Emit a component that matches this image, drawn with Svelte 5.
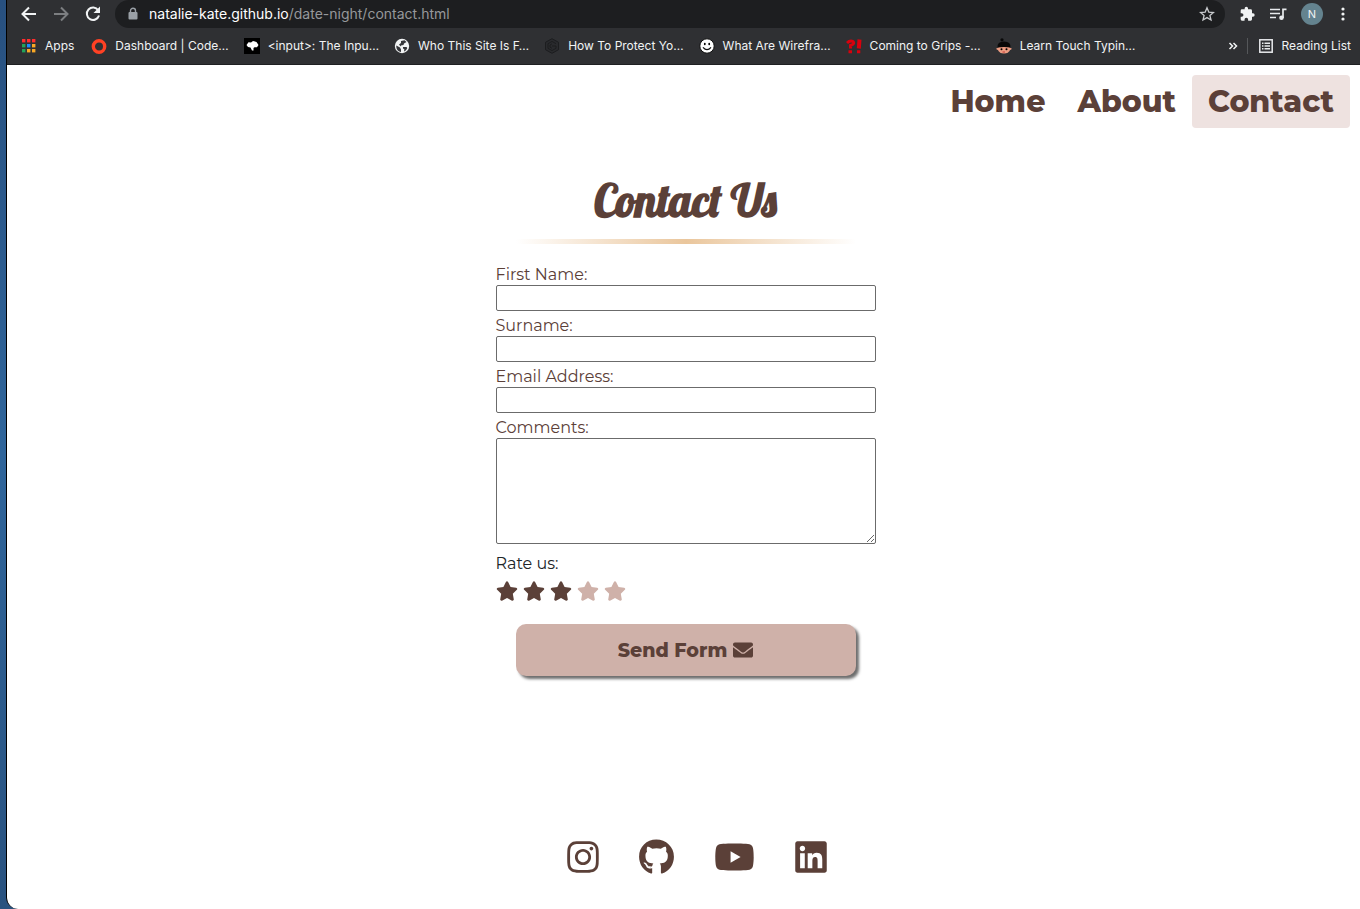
<script>
  const bookmarks = [
    { icon: 'ring', label: 'Dashboard | Code…' },
    { icon: 'mdn', label: '<input>: The Inpu…' },
    { icon: 'globe', label: 'Who This Site Is F…' },
    { icon: 'hex', label: 'How To Protect Yo…' },
    { icon: 'smile', label: 'What Are Wirefra…' },
    { icon: 'grips', label: 'Coming to Grips -…' },
    { icon: 'face', label: 'Learn Touch Typin…' }
  ];
  const appColours = ['#ff2d2d', '#ff2d2d', '#ff2d2d', '#22a35a', '#1a8cff', '#f9a825', '#22a35a', '#f9a825', '#f9a825'];
  const pages = ['Home', 'About', 'Contact'];
  const fields = [
    { id: 'first-name', label: 'First Name:', type: 'text' },
    { id: 'surname', label: 'Surname:', type: 'text' },
    { id: 'email', label: 'Email Address:', type: 'email' }
  ];
  let rating = $state(3);

  const social = [
    { name: 'Instagram', w: 32, box: '0 0 448 512', d: 'M224.1 141c-63.6 0-114.9 51.3-114.9 114.9s51.3 114.9 114.9 114.9S339 319.5 339 255.9 287.7 141 224.1 141zm0 189.6c-41.1 0-74.7-33.5-74.7-74.7s33.5-74.7 74.7-74.7 74.7 33.5 74.7 74.7-33.6 74.7-74.7 74.7zm146.4-194.3c0 14.9-12 26.8-26.8 26.8-14.9 0-26.8-12-26.8-26.8s12-26.8 26.8-26.8 26.8 12 26.8 26.8zm76.1 27.2c-1.7-35.9-9.9-67.7-36.2-93.9-26.2-26.2-58-34.4-93.9-36.2-37-2.1-147.9-2.1-184.9 0-35.8 1.7-67.6 9.9-93.9 36.1s-34.4 58-36.2 93.9c-2.1 37-2.1 147.9 0 184.9 1.7 35.9 9.9 67.7 36.2 93.9s58 34.4 93.9 36.2c37 2.1 147.9 2.1 184.9 0 35.9-1.7 67.7-9.9 93.9-36.2 26.2-26.2 34.4-58 36.2-93.9 2.1-37 2.1-147.8 0-184.8zM398.8 388c-7.8 19.6-22.9 34.7-42.6 42.6-29.5 11.7-99.5 9-132.1 9s-102.7 2.6-132.1-9c-19.6-7.8-34.7-22.9-42.6-42.6-11.7-29.5-9-99.5-9-132.1s-2.6-102.7 9-132.1c7.8-19.6 22.9-34.7 42.6-42.6 29.5-11.7 99.5-9 132.1-9s102.7-2.6 132.1 9c19.6 7.8 34.7 22.9 42.6 42.6 11.7 29.5 9 99.5 9 132.1s2.7 102.7-9 132.1z' },
    { name: 'GitHub', w: 35, box: '0 0 496 512', d: 'M165.9 397.4c0 2-2.3 3.6-5.2 3.6-3.3.3-5.6-1.3-5.6-3.6 0-2 2.3-3.6 5.2-3.6 3-.3 5.6 1.3 5.6 3.6zm-31.1-4.5c-.7 2 1.3 4.3 4.3 4.9 2.6 1 5.6 0 6.2-2s-1.3-4.3-4.3-5.2c-2.6-.7-5.5.3-6.2 2.3zm44.2-1.7c-2.9.7-4.9 2.6-4.6 4.9.3 2 2.9 3.3 5.9 2.6 2.9-.7 4.9-2.6 4.6-4.6-.3-1.9-3-3.2-5.9-2.9zM244.8 8C106.1 8 0 113.3 0 252c0 110.9 69.8 205.8 169.5 239.2 12.8 2.3 17.3-5.6 17.3-12.1 0-6.2-.3-40.4-.3-61.4 0 0-70 15-84.7-29.8 0 0-11.4-29.1-27.8-36.6 0 0-22.9-15.7 1.6-15.4 0 0 24.9 2 38.6 25.8 21.9 38.6 58.6 27.5 72.9 20.9 2.3-16 8.8-27.1 16-33.7-55.9-6.2-112.3-14.3-112.3-110.5 0-27.5 7.6-41.3 23.6-58.9-2.6-6.5-11.1-33.3 2.6-67.9 20.9-6.5 69 27 69 27 20-5.6 41.5-8.5 62.8-8.5s42.8 2.9 62.8 8.5c0 0 48.1-33.6 69-27 13.7 34.7 5.2 61.4 2.6 67.9 16 17.7 25.8 31.5 25.8 58.9 0 96.5-58.9 104.2-114.8 110.5 9.2 7.9 17 22.9 17 46.4 0 33.7-.3 75.4-.3 83.6 0 6.5 4.6 14.4 17.3 12.1C428.2 457.8 496 362.9 496 252 496 113.3 383.5 8 244.8 8z' },
    { name: 'YouTube', w: 41, box: '0 0 576 512', d: 'M549.655 124.083c-6.281-23.65-24.787-42.276-48.284-48.597C458.781 64 288 64 288 64S117.22 64 74.629 75.486c-23.497 6.322-42.003 24.947-48.284 48.597-11.412 42.867-11.412 132.305-11.412 132.305s0 89.438 11.412 132.305c6.281 23.65 24.787 41.5 48.284 47.821C117.22 448 288 448 288 448s170.78 0 213.371-11.486c23.497-6.321 42.003-24.171 48.284-47.821 11.412-42.867 11.412-132.305 11.412-132.305s0-89.438-11.412-132.305zm-317.51 213.508V175.185l142.739 81.205-142.739 81.201z' },
    { name: 'LinkedIn', w: 32, box: '0 0 448 512', d: 'M416 32H31.9C14.3 32 0 46.5 0 64.3v383.4C0 465.5 14.3 480 31.9 480H416c17.6 0 32-14.5 32-32.3V64.3c0-17.8-14.4-32.3-32-32.3zM135.4 416H69V202.2h66.5V416zm-33.2-243c-21.3 0-38.5-17.3-38.5-38.5S80.9 96 102.2 96c21.2 0 38.5 17.3 38.5 38.5 0 21.3-17.2 38.5-38.5 38.5zm282.1 243h-66.4V312c0-24.8-.5-56.7-34.5-56.7-34.6 0-39.9 27-39.9 54.9V416h-66.4V202.2h63.7v29.2h.9c8.9-16.8 30.6-34.5 62.9-34.5 67.2 0 79.7 44.3 79.7 101.9V416z' }
  ];
</script>

<div class="desktop">
  <div class="window">
    <header class="chrome">
      <div class="toolbar">
        <button class="tool" aria-label="Back"><svg width="18" height="18" viewBox="0 0 18 18"><path d="M16 9H3M9 2.5L2.5 9L9 15.500" fill="none" stroke="#f1f3f4" stroke-width="2" /></svg></button>
        <button class="tool" aria-label="Forward"><svg width="18" height="18" viewBox="0 0 18 18"><path d="M2 9H15M9 2.500L15.500 9L9 15.500" fill="none" stroke="#7c7e81" stroke-width="2" /></svg></button>
        <button class="tool" aria-label="Reload"><svg width="18" height="18" viewBox="0 0 18 18"><path d="M14.200 5.200A6.200 6.200 0 1 0 15 10.500" fill="none" stroke="#f1f3f4" stroke-width="2" /><path d="M16 1.500V8H9.500Z" fill="#f1f3f4" /></svg></button>
        <div class="address">
          <svg width="10" height="14" viewBox="0 0 10 14"><path d="M2.500 6V3.800a2.500 2.500 0 0 1 5 0V6" fill="none" stroke="#9aa0a6" stroke-width="1.400" /><rect x="0.500" y="5" width="9" height="7.500" rx="1" fill="#9aa0a6" /></svg>
          <span class="url">natalie-kate.github.io<span class="path">/date-night/contact.html</span></span>
          <button aria-label="Bookmark this page"><svg width="16" height="16" viewBox="0 0 16 16"><path d="M8 1.800L9.800 6.100L14.500 6.500L10.900 9.500L12 14L8 11.600L4 14L5.100 9.500L1.500 6.500L6.200 6.100Z" fill="none" stroke="#c8cacd" stroke-width="1.300" /></svg></button>
        </div>
        <div class="extras">
          <button aria-label="Extensions"><svg width="16" height="16" viewBox="0 0 24 24"><path fill="#f1f3f4" d="M21 11h-1.500V7a2 2 0 0 0-2-2h-4V3.500a2.500 2.500 0 0 0-5 0V5h-4a2 2 0 0 0-2 2v3.800H4a2.700 2.700 0 0 1 0 5.400H2.500V20a2 2 0 0 0 2 2h3.800v-1.500a2.700 2.700 0 0 1 5.400 0V22h3.800a2 2 0 0 0 2-2v-4H21a2.500 2.500 0 0 0 0-5z" /></svg></button>
          <button aria-label="Media controls"><svg width="18" height="16" viewBox="0 0 18 16"><path d="M1 3.500H11M1 7.500H11M1 11.500H7M14 12V3.300H17.500" fill="none" stroke="#e8eaed" stroke-width="1.700" /><circle cx="12.500" cy="11.800" r="2.300" fill="#e8eaed" /></svg></button>
          <button class="avatar" aria-label="Profile N">N</button>
          <button aria-label="Menu"><svg width="4" height="16" viewBox="0 0 4 16"><g fill="#f1f3f4"><circle cx="2" cy="3" r="1.600" /><circle cx="2" cy="8" r="1.600" /><circle cx="2" cy="13" r="1.600" /></g></svg></button>
        </div>
      </div>
      <nav class="bookmarks" aria-label="Bookmarks">
        <a class="apps" href="#apps">
          <svg width="14" height="14" viewBox="0 0 14 14">
            {#each appColours as fill, i}<rect x={(i % 3) * 5} y={Math.floor(i / 3) * 5} width="3.400" height="3.400" {fill} />{/each}
          </svg>Apps</a>
        {#each bookmarks as b}
          <a class="bookmark" href="#bookmark">
            <svg width="16" height="16" viewBox="0 0 16 16">
              {#if b.icon === 'ring'}
                <circle cx="8" cy="8.500" r="5.700" fill="none" stroke="#ff4124" stroke-width="3.400" />
              {:else if b.icon === 'mdn'}
                <rect width="16" height="16" fill="#000" /><path fill="#fff" d="M2.500 7L4.500 4.300L7 4.500L9 3L12.500 4L14.500 7L13 9.300H10.500L9.500 10V12.500H8L6.500 9.500L4 9Z" />
              {:else if b.icon === 'globe'}
                <circle cx="8" cy="8" r="7.200" fill="#f1f3f4" /><path fill="#35363a" d="M2.300 7.500L6 9.500L7 11.500V14C4 13.500 2 11 2.300 7.500ZM7 3L10.500 2.200L12.500 4L10 5.500L9.500 7L7 7.500L6.500 8.500L5 6.500L7 5ZM9 9H12.500L13.300 10C12.500 12 11.500 13 10 13.500L10.300 11.300L9 10.500Z" />
              {:else if b.icon === 'hex'}
                <g fill="none" stroke="#1c1d1f"><path d="M8 .7L14.500 4.300V11.700L8 15.300L1.500 11.700V4.300Z" fill="#292a2d" /><path d="M12 5.700L8 3.400L4 5.700V10.300L8 12.600L12 10.300V8H8M8 5.800L6 7V9.200L8 10.300" /></g>
              {:else if b.icon === 'smile'}
                <circle cx="8" cy="8" r="7.200" fill="#fff" stroke="#111" /><ellipse cx="5.800" cy="6" rx=".9" ry="1.300" /><ellipse cx="10.200" cy="6" rx=".9" ry="1.300" /><path d="M4 9.300Q8 14 12 9.300" fill="none" stroke="#111" stroke-width="1.200" />
              {:else if b.icon === 'grips'}
                <g fill="none" stroke="#d9000d" stroke-width="3"><path d="M1 5Q4 2 7 3.500Q9 6 4.500 7.500V10.500" /><path d="M13.500 1.500L12.800 10.500" stroke-width="4" /><path d="M2.500 13.700H6M11 13.700H14.300" /></g>
              {:else}
                <circle cx="6" cy="1.800" r="1.600" fill="#080808" /><ellipse cx="8" cy="10.800" rx="7.800" ry="2" fill="#ed9c82" /><ellipse cx="8" cy="11.300" rx="6" ry="4.300" fill="#ed9c82" /><path d="M1.500 9.500Q1 3.500 8 3.500T14.500 9.500Q8 8.500 1.500 9.500Z" fill="#080808" /><circle cx="5.500" cy="11.300" r="1" /><circle cx="10.500" cy="11.300" r="1" /><path d="M6.500 14H9" stroke="#c53d37" />
              {/if}
            </svg>{b.label}</a>
        {/each}
        <button class="more" aria-label="More bookmarks"><svg width="10" height="10" viewBox="0 0 10 10"><path d="M1.500 2L4.500 5L1.500 8M5.500 2L8.500 5L5.500 8" fill="none" stroke="#f1f3f4" stroke-width="1.500" /></svg></button>
        <a class="reading" href="#reading"><svg width="14" height="14" viewBox="0 0 14 14"><rect x=".8" y=".8" width="12.400" height="12.400" fill="none" stroke="#e8eaed" stroke-width="1.500" /><path d="M3 4.200H4.500M5.500 4.200H11M3 7H4.500M5.500 7H11M3 9.800H4.500M5.500 9.800H11" stroke="#e8eaed" stroke-width="1.400" /></svg>Reading List</a>
      </nav>
    </header>

    <nav class="site-nav" aria-label="Main">
      {#each pages as page}
        <a href="#{page.toLowerCase()}" class:active={page === 'Contact'}>{page}</a>
      {/each}
    </nav>

    <main>
      <h1>Contact Us</h1>
      <div class="rule"></div>
      <form onsubmit={(e) => e.preventDefault()}>
        {#each fields as f}
          <label for={f.id}>{f.label}</label>
          <input class="field" id={f.id} type={f.type} />
        {/each}
        <label for="comments">Comments:</label>
        <textarea id="comments"></textarea>
        <fieldset>
          <legend>Rate us:</legend>
          <div class="stars">
            {#each [1, 2, 3, 4, 5] as n}
              <label class:on={n <= rating}>
                <input type="radio" name="rating" value={n} bind:group={rating} aria-label="{n} stars" />
                <svg width="22" height="20" viewBox="0 0 576 512"><path fill="currentColor" d="M259.3 17.8L194 150.2 47.9 171.5c-26.2 3.8-36.7 36.1-17.7 54.6l105.7 103-25 145.5c-4.5 26.3 23.2 46 46.4 33.7L288 439.6l130.7 68.7c23.2 12.2 50.9-7.4 46.4-33.7l-25-145.5 105.7-103c19-18.5 8.5-50.8-17.7-54.6L382 150.2 316.7 17.8c-11.7-23.6-45.6-23.9-57.4 0z" /></svg>
              </label>
            {/each}
          </div>
        </fieldset>
        <button class="send" type="submit">Send Form
          <svg width="20" height="20" viewBox="0 0 512 512"><path fill="currentColor" d="M502.3 190.8c3.9-3.1 9.7-.2 9.7 4.7V400c0 26.5-21.5 48-48 48H48c-26.5 0-48-21.5-48-48V195.6c0-5 5.7-7.8 9.7-4.7 22.4 17.4 52.1 39.5 154.1 113.6 21.1 15.400 56.7 47.8 92.2 47.6 35.7.3 72-32.8 92.3-47.6 102-74.1 131.6-96.3 154-113.7zM256 320c23.2.4 56.6-29.2 73.4-41.4 132.7-96.3 142.8-104.7 173.4-128.7 5.8-4.5 9.2-11.5 9.2-18.9v-19c0-26.5-21.5-48-48-48H48c-26.5 0-48 21.5-48 48v19c0 7.4 3.4 14.3 9.2 18.9 30.6 23.9 40.7 32.4 173.4 128.7 16.8 12.2 50.2 41.8 73.4 41.4z" /></svg>
        </button>
      </form>
    </main>

    <footer>
      {#each social as s}
        <a href="#{s.name.toLowerCase()}" aria-label={s.name}><svg width={s.w} height="36" viewBox={s.box}><path fill="currentColor" d={s.d} /></svg></a>
      {/each}
    </footer>
  </div>
</div>

<style>
  :global(body) { margin: 0; }
  .desktop, .desktop * { box-sizing: border-box; }
  .desktop {
    min-height: 100vh;
    padding-left: 6px;
    display: flex;
    background: linear-gradient(#28507f, #2f659b 50%, #29527f);
  }
  .window {
    flex: 1;
    min-width: 0;
    display: flex;
    flex-direction: column;
    background: #fff;
    border-left: 1px solid #000;
    border-bottom-left-radius: 12px;
    color: #5b4038;
    font-family: Montserrat, Inter, sans-serif;
    font-size: 16px;
  }
  svg { display: block; flex: none; }
  a { color: inherit; text-decoration: none; }
  button { font: inherit; color: inherit; border: 0; background: none; padding: 0; cursor: pointer; }

  .chrome { background: #2f3033; border-bottom: 1px solid #1f2022; color: #f1f3f4; font: 12px/16px Inter, sans-serif; }
  .toolbar { height: 28px; display: flex; align-items: center; padding: 0 15px 0 13px; }
  .tool { width: 32px; }
  .address {
    flex: 1;
    height: 28px;
    display: flex;
    align-items: center;
    margin: 0 14px 0 -1px;
    padding: 0 10px 0 13px;
    border-radius: 14px;
    background: #1d1e20;
  }
  .url { flex: 1; margin-left: 11px; font: 14px/20px Inter, sans-serif; color: #fff; }
  .path { color: #96989b; }
  .extras { display: flex; align-items: center; gap: 14px; }
  .extras button:last-child { margin-left: 4px; }
  .avatar { width: 22px; height: 22px; border-radius: 50%; background: #64838f; font-size: 11px; }
  .bookmarks { height: 36px; display: flex; align-items: center; padding: 0 9px 0 15px; white-space: nowrap; }
  .bookmarks a { display: flex; align-items: center; gap: 8px; }
  .bookmarks .apps { gap: 9px; margin-right: 17px; }
  .bookmark { margin-right: 15px; }
  .more { margin-left: auto; }
  .bookmarks .reading { margin-left: 9px; padding-left: 11px; gap: 9px; border-left: 1px solid #55575a; }

  .site-nav {
    display: flex;
    justify-content: flex-end;
    padding: 10px 10px 0;
    font-size: 30px;
    font-weight: 800;
    line-height: 53px;
  }
  .site-nav a { padding: 0 16px; border-radius: 4px; }
  .site-nav .active { background: #eee2e0; }

  main { flex: 1; width: 100%; max-width: 384px; margin: 44px auto 0; padding-left: 4px; }
  h1 { margin: 0; font: bold 44px/58px Lobster, "Liberation Serif", serif; text-align: center; }
  .rule { height: 5px; margin: 9px 20px 20px; background: linear-gradient(90deg, transparent, #eac69c, transparent); }
  form > label { display: block; height: 25px; line-height: 21px; }
  form > label:first-child { height: 21px; }
  .field, textarea { display: block; width: 100%; border: 1px solid #6b6b6b; border-radius: 2px; background: #fff; font: inherit; }
  .field { height: 26px; padding: 1px 2px; }
  form > label:not(:first-child) { padding-top: 4px; }
  textarea { height: 106px; resize: both; }
  fieldset { border: 0; margin: 0; padding: 5px 0 0; min-width: 0; }
  legend { padding: 8px 0 0; line-height: 24px; color: #212529; }
  .stars { display: flex; gap: 5px; }
  .stars label { color: #cfb1a9; cursor: pointer; }
  .stars .on { color: #5b4038; }
  .stars input { position: absolute; opacity: 0; width: 1px; height: 1px; margin: 0; }
  .send {
    display: flex;
    align-items: center;
    justify-content: center;
    gap: 6px;
    width: calc(100% - 40px);
    height: 52px;
    margin: 23px 20px 0;
    border-radius: 10px;
    background: #cfb1a9;
    box-shadow: 3px 3px 3px #6d6d6d;
    font-size: 19px;
    font-weight: 800;
  }
  footer { display: flex; justify-content: center; gap: 40px; padding: 24px 0 34px 26px; }
</style>
